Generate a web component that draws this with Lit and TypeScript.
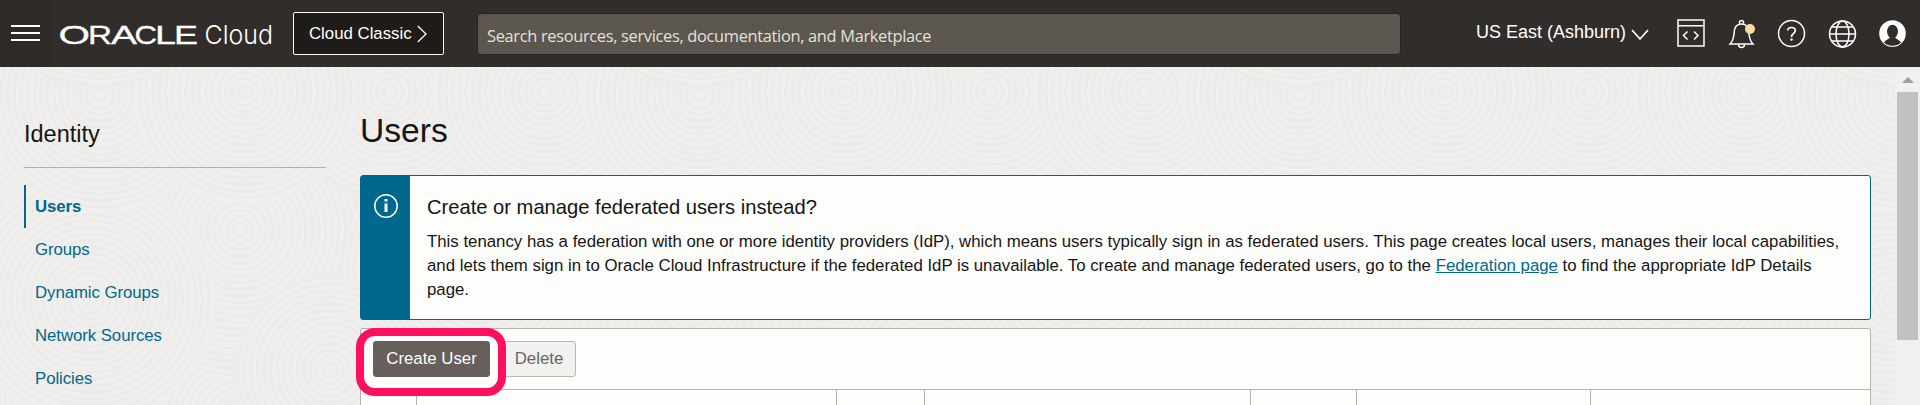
import { LitElement, html, css, svg } from "lit";
import { customElement } from "lit/decorators.js";

// One 600px tile of the ripple pattern: centre x, centre y, radius.
const ripples: [number, number, number][] = [
  [240, 420, 150], [540, 400, 150], [240, 230, 150], [480, 270, 140], [90, 300, 125],
  [330, 370, 95], [390, 92, 108], [100, 95, 118], [245, 92, 112], [545, 92, 112], [100, -60, 147],
];

@customElement("swirl-backdrop")
class SwirlBackdrop extends LitElement {
  static styles = css`
    :host { display: block; width: 1895px; height: 338px; }
    svg { display: block; }
  `;
  render() {
    return html`<svg width="1895" height="338" viewBox="0 67 1895 338">
      <rect y="67" width="1895" height="338" fill="#f0efed" />
      ${[-600, 0, 600, 1200, 1800].map((dx) => ripples.map(([x, y, r]) => svg`<g fill="none" stroke="#ecebe9" stroke-width="3">
        <circle cx=${x + dx} cy=${y} r=${r} fill="#f0efed" stroke="none" />
        ${Array.from({ length: Math.floor(r / 6.6) }, (_, i) => svg`
          <circle cx=${x + dx} cy=${y} r=${(i + 1) * 6.6} />`)}
      </g>`))}
    </svg>`;
  }
}

@customElement("console-header")
class ConsoleHeader extends LitElement {
  static styles = css`
    :host { display: block; }
    .bar { display: flex; height: 67px; background: #312d2a; color: #fff; box-sizing: border-box; }
    .menu { width: 50px; height: 67px; background: #2e2a27; display: block; flex: none; }
    .brand { display: block; flex: none; margin-left: 5px; }
    .classic { box-sizing: border-box; width: 151px; height: 43px; margin: 12px 0 0 18px; padding: 0 0 0 15px; border: 1px solid #fff; border-radius: 2px; background: #1f1b18; display: flex; align-items: center; gap: 5px; color: #fff; font: 16.8px "Liberation Sans", sans-serif; flex: none; white-space: nowrap; }
    .label { height: 20px; line-height: 19px; }
    .search { box-sizing: border-box; width: 924px; height: 42px; margin: 13px 0 0 33px; padding-left: 9px; border: 1px solid #272320; border-radius: 4px; background: #5b564e; color: #e4e1dd; font: 16.4px/43px "Open Sans", sans-serif; letter-spacing: -0.32px; flex: none; white-space: nowrap; }
    .region { display: flex; gap: 5px; margin: 22px 0 0 75px; font: 18px/20px "Liberation Sans", sans-serif; white-space: nowrap; width: 173px; flex: none; }
    .chev { margin-top: 5px; }
    .icons { display: block; flex: none; margin-left: 21px; }
    svg { flex: none; }
  `;
  render() {
    return html`<header class="bar">
      <svg class="menu" viewBox="0 0 50 67"><path d="M11 26H40M11 33H40M11 40H40" stroke="#fff" stroke-width="2" /></svg>
      <svg class="brand" width="220" height="67" viewBox="55 0 220 67" fill="#fff">
        <text y="43.5" font-family="Liberation Sans, sans-serif" font-size="26" stroke="#fff" stroke-width=".3"><tspan x="58.5" textLength="31.500" lengthAdjust="spacingAndGlyphs">O</tspan><tspan x="88" textLength="24" lengthAdjust="spacingAndGlyphs">R</tspan><tspan x="111" textLength="26" lengthAdjust="spacingAndGlyphs">A</tspan><tspan x="134.500" textLength="22.500" lengthAdjust="spacingAndGlyphs">C</tspan><tspan x="155" textLength="21" lengthAdjust="spacingAndGlyphs">L</tspan><tspan x="174" textLength="24" lengthAdjust="spacingAndGlyphs">E</tspan></text>
        <text x="204.500" y="43.5" font-family="Inter, sans-serif" font-weight="300" font-size="26" textLength="68.500" lengthAdjust="spacingAndGlyphs">Cloud</text>
      </svg>
      <button class="classic"><span class="label">Cloud Classic</span>
        <svg width="10" height="18" viewBox="0 0 10 18"><path d="M.8 1L9 9L.8 17" fill="none" stroke="#fff" stroke-width="1.3" /></svg>
      </button>
      <div class="search">Search resources, services, documentation, and Marketplace</div>
      <div class="region"><span>US East (Ashburn)</span>
        <svg class="chev" width="18" height="14" viewBox="0 0 18 14"><path d="M1 3L9 12L17 3" fill="none" stroke="#fff" stroke-width="1.7" /></svg>
      </div>
      <svg class="icons" width="250" height="67" viewBox="1670 0 250 67" fill="none" stroke="#fff" stroke-width="1.5">
        <rect x="1678" y="20" width="26" height="26" /><path d="M1678 25.7H1704M1687.5 31.5L1683.5 35.5L1687.5 39.5M1694 31.5L1698 35.5L1694 39.5" />
        <path d="M1730 44C1733 41 1733.5 39 1734 34C1734 27 1737 24 1741.500 24S1749 27 1749 34C1749.500 39 1750 41 1753 44ZM1739.500 23.500V22.500A2 2 0 0 1 1743.500 22.500V23.500M1738.500 44.500A3 3 0 0 0 1744.500 44.500" />
        <circle cx="1750" cy="29" r="5" fill="#f9dd9c" stroke="none" />
        <circle cx="1791.500" cy="33.500" r="13" />
        <path d="M1787.700 30.500C1787.900 26.500 1795.300 26.500 1795.300 30.600C1795.300 33.500 1791.500 33.300 1791.500 37" stroke-width="1.700" /><circle cx="1791.500" cy="39.500" r="1.200" fill="#fff" stroke="none" />
        <circle cx="1842.500" cy="34" r="13" /><ellipse cx="1842.500" cy="34" rx="6.500" ry="13" /><path d="M1829.500 34H1855.500M1832 27H1853M1832 41H1853" />
        <circle cx="1892.500" cy="33.500" r="13.300" fill="#fff" stroke="none" />
        <ellipse cx="1892.500" cy="31.500" rx="5.500" ry="6.800" fill="#312d2a" stroke="none" />
        <path d="M1884 42.500C1886 39.500 1889 39.500 1890 37H1895C1896 39.500 1899 39.500 1901 42.500C1897 46.800 1888 46.800 1884 42.500Z" fill="#312d2a" stroke="none" />
      </svg>
    </header>`;
  }
}

@customElement("identity-nav")
class IdentityNav extends LitElement {
  static styles = css`
    :host { display: block; width: 302px; padding: 50px 0 0 24px; }
    .title { margin: 0; height: 50px; border-bottom: 1px solid #b3b1ae; font-size: 23.5px; line-height: 34px; font-weight: 400; }
    .list { padding-top: 17px; display: flex; flex-direction: column; }
    .item { box-sizing: border-box; height: 43px; line-height: 44px; padding-left: 11px; color: #00688c; text-decoration: none; letter-spacing: -0.06px; }
    .active { border-left: 2px solid #00688c; padding-left: 9px; font-weight: 700; }
  `;
  render() {
    return html`<h2 class="title">Identity</h2>
      <nav class="list">${["Users", "Groups", "Dynamic Groups", "Network Sources", "Policies"].map(
        (t, i) => html`<a class="item ${i ? "" : "active"}">${t}</a>`)}</nav>`;
  }
}

@customElement("app-root")
class AppRoot extends LitElement {
  static styles = css`
    :host { display: block; width: 1920px; height: 405px; overflow: hidden; font: 16.8px "Liberation Sans", sans-serif; color: #161513; }
    .body { display: grid; grid-template-columns: 1895px 25px; height: 338px; }
    .backdrop, .content { grid-column: 1; grid-row: 1; }
    .content { display: flex; height: 338px; overflow: hidden; z-index: 1; }
    .main { width: 1511px; margin-left: 34px; flex: none; }
    .heading { margin: 0; font-size: 33.6px; font-weight: 400; line-height: 40px; padding-top: 44px; height: 64px; }
    .notice { box-sizing: border-box; display: flex; height: 145px; border: 1px solid #00688c; border-radius: 3px; background: #fdfdfb; }
    .stripe { width: 49px; background: #00688c; display: flex; justify-content: center; padding-top: 18px; box-sizing: border-box; flex: none; }
    .copy { padding: 19px 0 0 17px; flex: none; width: 1425px; }
    .lead { margin: 0 0 10px; font-size: 20.16px; line-height: 25px; font-weight: 400; }
    .para { margin: 0; line-height: 24px; white-space: nowrap; letter-spacing: 0.006px; }
    .link { color: #00688c; text-decoration: underline; }
    .panel { box-sizing: border-box; margin-top: 8px; height: 90px; border: 1px solid #b8b3ad; border-radius: 3px; background: #fdfdfb; }
    .tools { display: flex; gap: 12px; padding: 12px 0 0 12px; height: 48px; }
    .btn { box-sizing: border-box; height: 36px; border: 1px solid #bdb8b2; border-radius: 3px; background: #f2f1ef; color: #6b6561; font: 16.8px/32px "Liberation Sans", sans-serif; padding: 0 0 1px; width: 74px; text-align: center; }
    .primary { width: 117px; background: #665f5b; border-color: #665f5b; color: #fff; position: relative; }
    .ring { position: absolute; box-sizing: border-box; left: -18px; top: -14px; width: 150px; height: 68px; border: 8px solid #ff0f5f; border-radius: 19px; }
    .cells { display: grid; grid-template-columns: 56px 420px 88px 326px 106px 234px 1fr; border-top: 1px solid #b8b3ad; height: 30px; }
    .cell { border-left: 1px solid #b8b3ad; margin-left: -1px; }
    .scroll { background: #f0f0f0; display: flex; flex-direction: column; align-items: center; padding-top: 10px; gap: 9px; grid-column: 2; grid-row: 1; }
    .up { border: 6px solid transparent; border-top: 0; border-bottom: 6px solid #a0a0a0; }
    .thumb { width: 21px; height: 248px; background: #c1c1c1; }
  `;
  render() {
    return html`<console-header></console-header>
      <div class="body">
        <swirl-backdrop class="backdrop"></swirl-backdrop>
        <div class="content">
          <identity-nav></identity-nav>
          <main class="main">
            <h1 class="heading">Users</h1>
            <section class="notice">
              <div class="stripe"><svg width="24" height="24" viewBox="0 0 24 24"><circle cx="12" cy="12" r="11.200" fill="none" stroke="#fff" stroke-width="1.500" /><path d="M10.500 5H13.500V7.500H10.500ZM10.500 9.500H13.500V18H10.500Z" fill="#fff" /></svg></div>
              <div class="copy">
                <h3 class="lead">Create or manage federated users instead?</h3>
                <p class="para">This tenancy has a federation with one or more identity providers (IdP), which means users typically sign in as federated users. This page creates local users, manages their local capabilities,<br />and lets them sign in to Oracle Cloud Infrastructure if the federated IdP is unavailable. To create and manage federated users, go to the <a class="link">Federation page</a> to find the appropriate IdP Details<br />page.</p>
              </div>
            </section>
            <section class="panel">
              <div class="tools">
                <button class="btn primary">Create User<span class="ring"></span></button>
                <button class="btn">Delete</button>
              </div>
              <div class="cells"><span></span>${Array.from({ length: 6 }, () => html`<span class="cell"></span>`)}</div>
            </section>
          </main>
        </div>
        <div class="scroll"><span class="up"></span><span class="thumb"></span></div>
      </div>`;
  }
}
